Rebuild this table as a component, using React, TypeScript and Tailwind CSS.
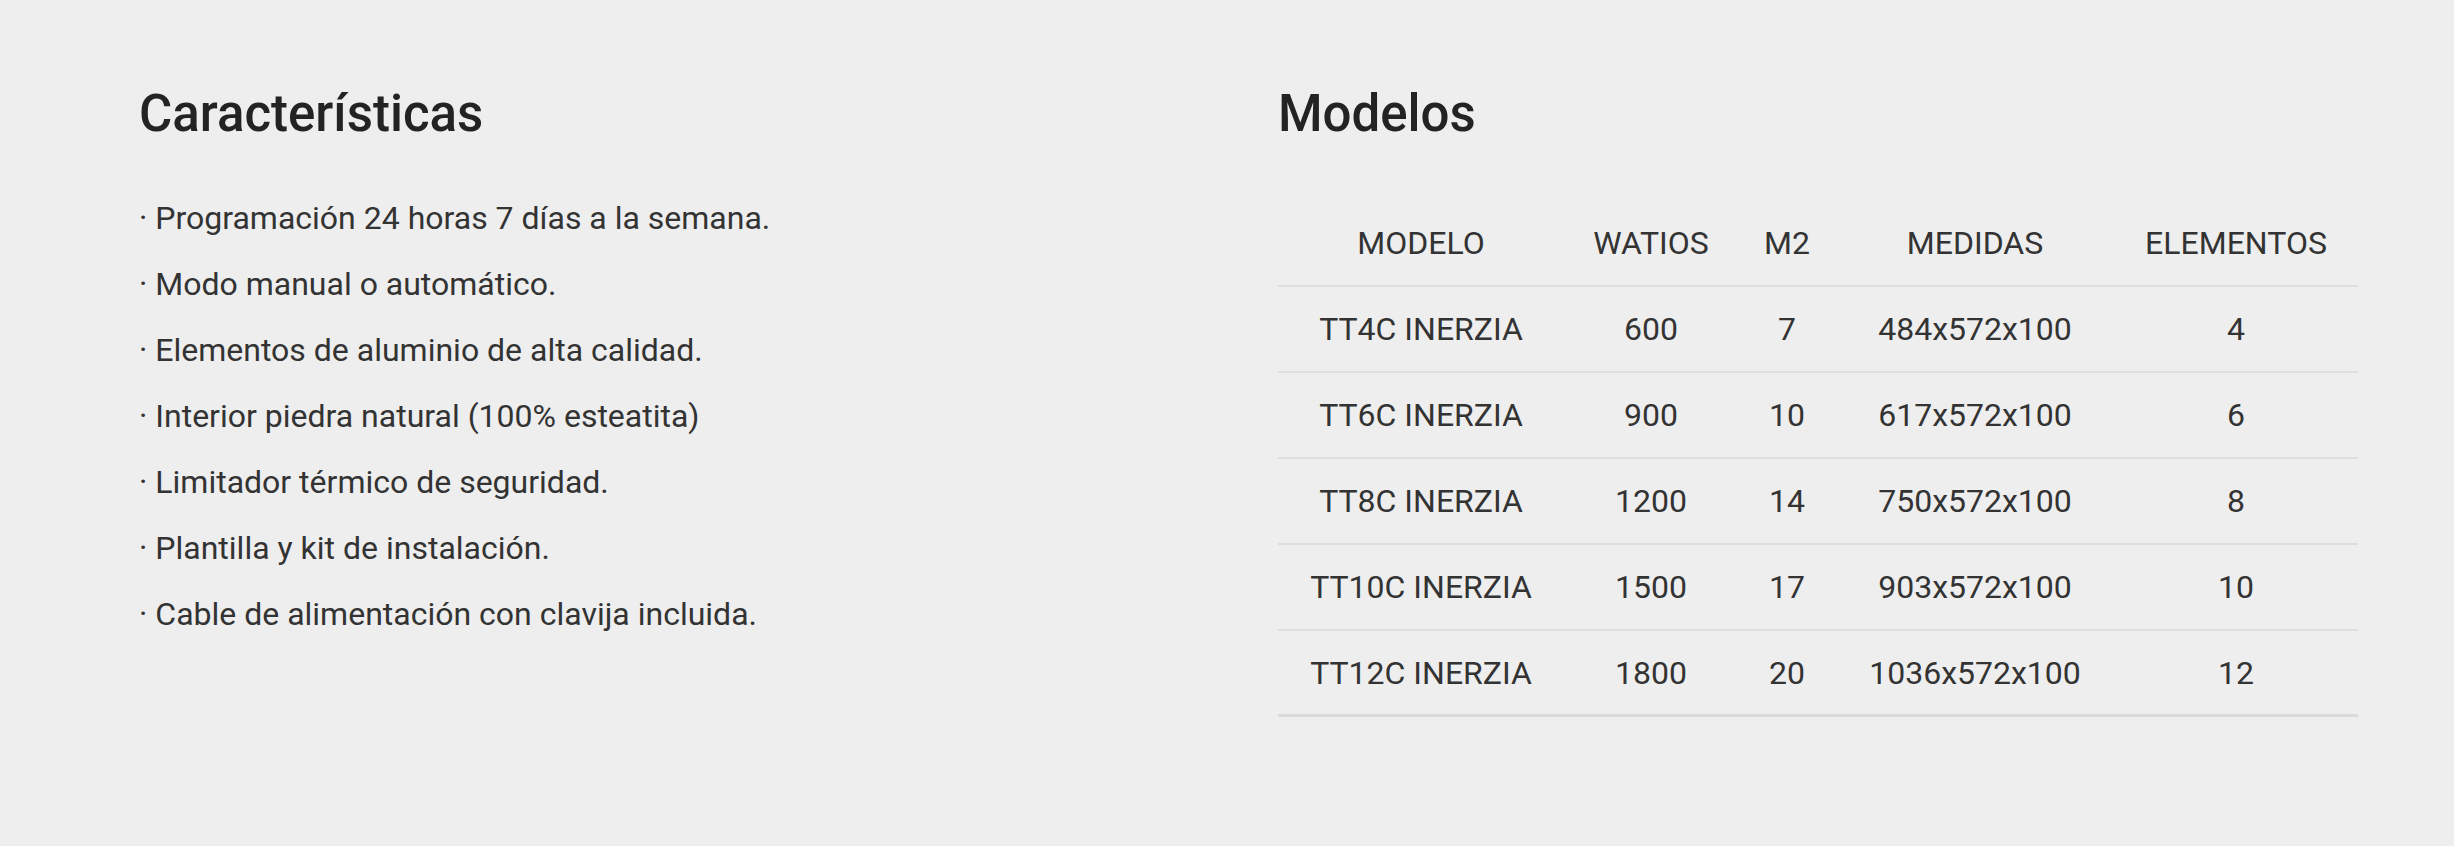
const features = [
  "Programación 24 horas 7 días a la semana.",
  "Modo manual o automático.",
  "Elementos de aluminio de alta calidad.",
  "Interior piedra natural (100% esteatita)",
  "Limitador térmico de seguridad.",
  "Plantilla y kit de instalación.",
  "Cable de alimentación con clavija incluida.",
];

const rows = [
  ["TT4C INERZIA", "600", "7", "484x572x100", "4"],
  ["TT6C INERZIA", "900", "10", "617x572x100", "6"],
  ["TT8C INERZIA", "1200", "14", "750x572x100", "8"],
  ["TT10C INERZIA", "1500", "17", "903x572x100", "10"],
  ["TT12C INERZIA", "1800", "20", "1036x572x100", "12"],
];

const headers = ["MODELO", "WATIOS", "M2", "MEDIDAS", "ELEMENTOS"];

function Row({ cells, last }: { cells: string[]; last?: boolean }) {
  return (
    <div
      className={
        "grid grid-cols-[286px_174px_98px_278px_244px] h-[86px] items-center text-center " +
        (last ? "border-b-[3px] border-[#dadada]" : "border-b-2 border-[#dedede]")
      }
    >
      {cells.map((c, i) => (
        <div key={i}>{c}</div>
      ))}
    </div>
  );
}

export default function App() {
  return (
    <div className="min-h-screen w-full bg-[#eeeeee] font-['Roboto'] text-[#333333] flex pl-[139px] pt-[83px]">
      <div className="w-[1139px]">
        <h2 className="text-[51px] leading-[62px] font-medium text-[#232323]">Características</h2>
        <ul className="mt-[40px] text-[32px] leading-[66px]">
          {features.map((f) => (
            <li key={f}>· {f}</li>
          ))}
        </ul>
      </div>
      <div className="w-[1080px]">
        <h2 className="text-[51px] leading-[62px] font-medium text-[#232323]">Modelos</h2>
        <div className="mt-[56px] text-[32px]">
          <Row cells={headers} />
          {rows.map((r, i) => (
            <Row key={r[0]} cells={r} last={i === rows.length - 1} />
          ))}
        </div>
      </div>
    </div>
  );
}
